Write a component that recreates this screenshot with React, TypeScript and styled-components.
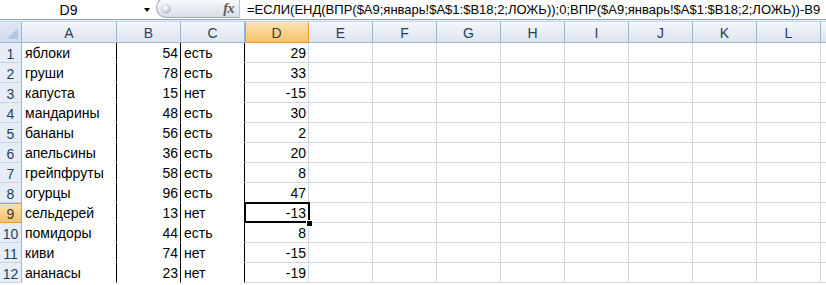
import React from "react";
import styled, { createGlobalStyle, css } from "styled-components";

const GlobalStyle = createGlobalStyle`
  html, body { margin: 0; padding: 0; background: #ffffff; }
  body { width: 826px; height: 285px; overflow: hidden; }
`;

const FONT = `"Liberation Sans", Arial, sans-serif`;

const Page = styled.div`
  width: 826px;
  height: 285px;
  overflow: hidden;
  font-family: ${FONT};
  display: flex;
  flex-direction: column;
`;

const FormulaBar = styled.div`
  height: 19px;
  display: flex;
  align-items: stretch;
  background: #ffffff;
  flex: none;
`;

const NameBox = styled.div`
  width: 137px;
  display: flex;
  align-items: center;
  justify-content: center;
  font-size: 14px;
  color: #000;
`;

const DropArrow = styled.div`
  width: 19px;
  display: flex;
  align-items: center;
  justify-content: center;
  &::before {
    content: "";
    width: 0;
    height: 0;
    border-left: 3.5px solid transparent;
    border-right: 3.5px solid transparent;
    border-top: 4px solid #000;
  }
`;

const FxPill = styled.div`
  width: 84px;
  margin-top: -3px;
  height: 21px;
  box-sizing: border-box;
  border: 1px solid #9aabc2;
  border-right: 1px solid #b7c3d2;
  border-radius: 11px 0 0 11px;
  background: linear-gradient(#fbfcfd, #e7ebf1 55%, #d9dfe7);
  display: flex;
  align-items: center;
  justify-content: space-between;
  padding: 2px 5px 0 4px;
`;

const Knob = styled.div`
  width: 10px;
  height: 10px;
  border-radius: 50%;
  background: radial-gradient(circle at 40% 35%, #ffffff, #c4cad2 60%, #9fa7b2);
  box-shadow: 0 0 0 1px #e9edf2;
`;

const Fx = styled.span`
  font-family: "Liberation Serif", "DejaVu Serif", serif;
  font-style: italic;
  font-weight: bold;
  font-size: 14px;
  color: #5c5c5c;
  letter-spacing: -0.5px;
`;

const FormulaText = styled.div`
  flex: 1;
  padding-left: 7px;
  display: flex;
  align-items: center;
  font-size: 13px;
  color: #000;
  white-space: nowrap;
  overflow: hidden;
`;

const Divider = styled.div`
  flex: none;
  height: 3px;
  box-sizing: border-box;
  border-top: 1px solid #8fa6c3;
  border-bottom: 1px solid #c9d7e8;
  background: #e3ebf5;
`;

const Sheet = styled.div`
  display: grid;
  grid-template-columns: 22px 95px repeat(12, 64px);
  grid-template-rows: 21px repeat(12, 20px);
  font-size: 14px;
  width: max-content;
`;

const headerBase = css`
  box-sizing: border-box;
  display: flex;
  align-items: center;
  justify-content: center;
  color: #283f5c;
`;

const Corner = styled.div`
  ${headerBase};
  position: relative;
  background: linear-gradient(#dfe8f4, #cfdcee);
  border-right: 1px solid #9eb6ce;
  border-bottom: 1px solid #9eb6ce;
  &::after {
    content: "";
    position: absolute;
    right: 3px;
    bottom: 3px;
    width: 0;
    height: 0;
    border-left: 11px solid transparent;
    border-bottom: 11px solid #b3c6df;
  }
`;

const ColHead = styled.div<{ $active?: boolean }>`
  ${headerBase};
  padding-top: 1px;
  border-right: 1px solid #9eb6ce;
  border-bottom: 1px solid #9eb6ce;
  background: linear-gradient(#f4f7fb, #e9eef6 45%, #dde5f0);
  ${(p) =>
    p.$active &&
    css`
      background: linear-gradient(#fbe3b4, #f8d491 45%, #f3c46a);
      border-right-color: #f29536;
      border-bottom: 1px solid #f29536;
      box-shadow: inset 1px 0 0 #f29536;
      color: #3a3a3a;
    `}
`;

const RowHead = styled.div<{ $active?: boolean }>`
  ${headerBase};
  padding-top: 2px;
  background: #e6edf7;
  border-right: 1px solid #9eb6ce;
  border-bottom: 1px solid #c5d3e5;
  ${(p) =>
    p.$active &&
    css`
      background: linear-gradient(#fbe3b4, #f8d491 45%, #f3c46a);
      border-right-color: #f29536;
      border-bottom-color: #f29536;
      box-shadow: inset 0 1px 0 #f29536;
      color: #3a3a3a;
    `}
`;

const Cell = styled.div<{ $align?: "left" | "right"; $boxed?: boolean; $active?: boolean }>`
  box-sizing: border-box;
  position: relative;
  display: flex;
  align-items: flex-end;
  padding-bottom: 1px;
  justify-content: ${(p) => (p.$align === "right" ? "flex-end" : "flex-start")};
  padding-left: 3px;
  padding-right: 2px;
  white-space: nowrap;
  color: #000;
  border-right: 1px solid ${(p) => (p.$boxed ? "#000" : "#d0d7e5")};
  border-bottom: 1px solid ${(p) => (p.$boxed ? "#ffffff" : "#d0d7e5")};
  ${(p) =>
    p.$active &&
    css`
      &::after {
        content: "";
        position: absolute;
        top: -1px;
        left: -1px;
        right: -2px;
        bottom: -1px;
        border: 2px solid #000;
        z-index: 2;
      }
      &::before {
        content: "";
        position: absolute;
        right: -5px;
        bottom: -5px;
        width: 5px;
        height: 5px;
        background: #000;
        border: 1px solid #fff;
        z-index: 3;
      }
    `}
`;

type Row = [string, number, string, number];

const rows: Row[] = [
  ["яблоки", 54, "есть", 29],
  ["груши", 78, "есть", 33],
  ["капуста", 15, "нет", -15],
  ["мандарины", 48, "есть", 30],
  ["бананы", 56, "есть", 2],
  ["апельсины", 36, "есть", 20],
  ["грейпфруты", 58, "есть", 8],
  ["огурцы", 96, "есть", 47],
  ["сельдерей", 13, "нет", -13],
  ["помидоры", 44, "есть", 8],
  ["киви", 74, "нет", -15],
  ["ананасы", 23, "нет", -19],
];

const cols = ["A", "B", "C", "D", "E", "F", "G", "H", "I", "J", "K", "L", "M"];
const emptyCols = ["E", "F", "G", "H", "I", "J", "K", "L", "M"];

export default function App() {
  return (
    <Page>
      <GlobalStyle />
      <FormulaBar>
        <NameBox>D9</NameBox>
        <DropArrow />
        <FxPill>
          <Knob />
          <Fx>fx</Fx>
        </FxPill>
        <FormulaText>
          =ЕСЛИ(ЕНД(ВПР($A9;январь!$A$1:$B18;2;ЛОЖЬ));0;ВПР($A9;январь!$A$1:$B18;2;ЛОЖЬ))-B9
        </FormulaText>
      </FormulaBar>
      <Divider />
      <Sheet>
        <Corner />
        {cols.map((c) => (
          <ColHead key={c} $active={c === "D"}>
            {c}
          </ColHead>
        ))}
        {rows.map((r, i) => {
          const n = i + 1;
          return (
            <React.Fragment key={n}>
              <RowHead $active={n === 9}>{n}</RowHead>
              <Cell $boxed>{r[0]}</Cell>
              <Cell $boxed $align="right">
                {r[1]}
              </Cell>
              <Cell $boxed>{r[2]}</Cell>
              <Cell $align="right" $active={n === 9}>
                {r[3]}
              </Cell>
              {emptyCols.map((c) => (
                <Cell key={c} />
              ))}
            </React.Fragment>
          );
        })}
      </Sheet>
    </Page>
  );
}
